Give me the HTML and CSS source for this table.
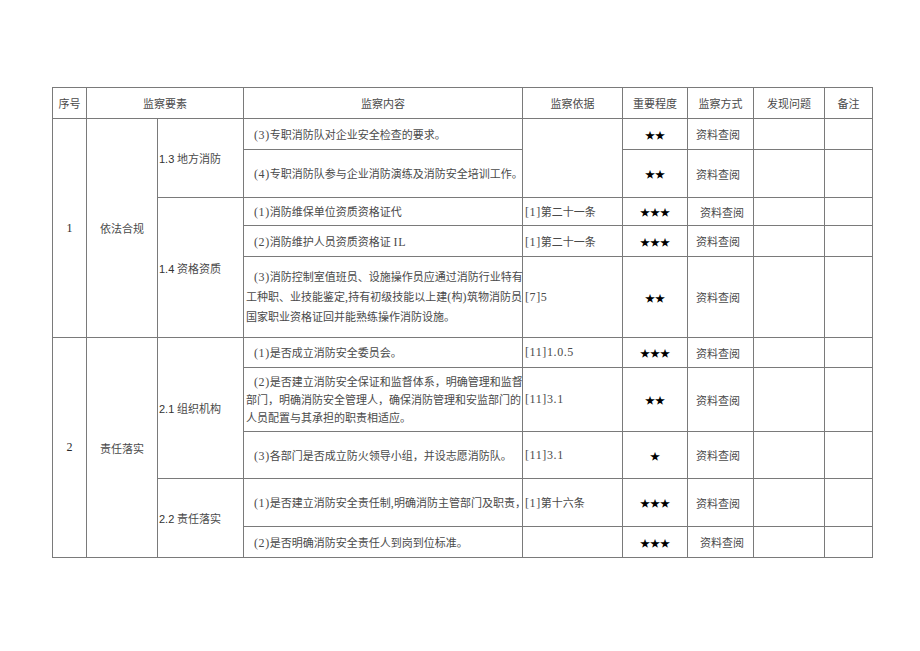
FILE: index.html
```html
<!DOCTYPE html>
<html lang="zh-CN">
<head>
<meta charset="utf-8">
<title>监察表</title>
<link rel="stylesheet" href="styles.css">
</head>
<body>
<div class="page">
<table class="grid">
  <colgroup>
    <col class="c-no">
    <col class="c-cat">
    <col class="c-sub">
    <col class="c-txt">
    <col class="c-ref">
    <col class="c-star">
    <col class="c-way">
    <col class="c-find">
    <col class="c-note">
  </colgroup>
  <tr class="h31">
    <th>序号</th>
    <th colspan="2">监察要素</th>
    <th>监察内容</th>
    <th>监察依据</th>
    <th>重要程度</th>
    <th>监察方式</th>
    <th>发现问题</th>
    <th>备注</th>
  </tr>
  <tr class="h31">
    <td rowspan="5" class="num">1</td>
    <td rowspan="5" class="cat">依法合规</td>
    <td rowspan="2" class="sub"><span class="sn">1.3</span> 地方消防</td>
    <td class="txt"><span class="n">(3)</span>专职消防队对企业安全检查的要求。</td>
    <td rowspan="2" class="ref"></td>
    <td class="star">★★</td>
    <td class="way">资料查阅</td>
    <td></td>
    <td></td>
  </tr>
  <tr class="h48">
    <td class="txt"><span class="n">(4)</span>专职消防队参与企业消防演练及消防安全培训工作。</td>
    <td class="star">★★</td>
    <td class="way">资料查阅</td>
    <td></td>
    <td></td>
  </tr>
  <tr class="h28">
    <td rowspan="3" class="sub"><span class="sn">1.4</span> 资格资质</td>
    <td class="txt"><span class="n">(1)</span>消防维保单位资质资格证代</td>
    <td class="ref"><span class="n">[1]</span>第二十一条</td>
    <td class="star">★★★</td>
    <td class="way way-r">资料查阅</td>
    <td></td>
    <td></td>
  </tr>
  <tr class="h31">
    <td class="txt"><span class="n">(2)</span>消防维护人员资质资格证 <span class="n">IL</span></td>
    <td class="ref"><span class="n">[1]</span>第二十一条</td>
    <td class="star">★★★</td>
    <td class="way">资料查阅</td>
    <td></td>
    <td></td>
  </tr>
  <tr class="h81">
    <td class="txt multi lh20"><span class="n">(3)</span>消防控制室值班员、设施操作员应通过消防行业特有<br>工种职、业技能鉴定<span class="p">,</span>持有初级技能以上建<span class="p">(</span>构<span class="p">)</span>筑物消防员<br>国家职业资格证回并能熟练操作消防设施。</td>
    <td class="ref"><span class="n">[7]5</span></td>
    <td class="star">★★</td>
    <td class="way">资料查阅</td>
    <td></td>
    <td></td>
  </tr>
  <tr class="h30">
    <td rowspan="5" class="num">2</td>
    <td rowspan="5" class="cat">责任落实</td>
    <td rowspan="3" class="sub"><span class="sn">2.1</span> 组织机构</td>
    <td class="txt"><span class="n">(1)</span>是否成立消防安全委员会。</td>
    <td class="ref"><span class="n">[11]1.0.5</span></td>
    <td class="star">★★★</td>
    <td class="way">资料查阅</td>
    <td></td>
    <td></td>
  </tr>
  <tr class="h64">
    <td class="txt multi lh18"><span class="n">(2)</span>是否建立消防安全保证和监督体系，明确管理和监督<br>部门，明确消防安全管理人，确保消防管理和安监部门的<br>人员配置与其承担的职责相适应。</td>
    <td class="ref"><span class="n">[11]3.1</span></td>
    <td class="star">★★</td>
    <td class="way">资料查阅</td>
    <td></td>
    <td></td>
  </tr>
  <tr class="h47">
    <td class="txt"><span class="n">(3)</span>各部门是否成立防火领导小组，并设志愿消防队。</td>
    <td class="ref"><span class="n">[11]3.1</span></td>
    <td class="star">★</td>
    <td class="way">资料查阅</td>
    <td></td>
    <td></td>
  </tr>
  <tr class="h48">
    <td rowspan="2" class="sub"><span class="sn">2.2</span> 责任落实</td>
    <td class="txt"><span class="n">(1)</span>是否建立消防安全责任制<span class="p">,</span>明确消防主管部门及职责，</td>
    <td class="ref"><span class="n">[1]</span>第十六条</td>
    <td class="star">★★★</td>
    <td class="way">资料查阅</td>
    <td></td>
    <td></td>
  </tr>
  <tr class="h31">
    <td class="txt"><span class="n">(2)</span>是否明确消防安全责任人到岗到位标准。</td>
    <td class="ref"></td>
    <td class="star">★★★</td>
    <td class="way way-r">资料查阅</td>
    <td></td>
    <td></td>
  </tr>
</table>
</div>
</body>
</html>
```

FILE: styles.css
```css
html, body {
  margin: 0;
  padding: 0;
  background: #ffffff;
}

body {
  font-family: "Liberation Serif", "Noto Sans CJK SC", serif;
  color: #4a4a4a;
}

.page {
  padding: 87px 0 0 52px;
}

.grid {
  border-collapse: collapse;
  table-layout: fixed;
  width: 821px;
  font-size: 11px;
}

.grid th,
.grid td {
  border: 1px solid #7a7a7a;
  padding: 0;
  vertical-align: middle;
  font-weight: normal;
  white-space: nowrap;
  overflow: visible;
}

.grid th {
  text-align: center;
  color: #4a4a4a;
}

.c-no { width: 34px; }
.c-cat { width: 71px; }
.c-sub { width: 86px; }
.c-txt { width: 279px; }
.c-ref { width: 100px; }
.c-star { width: 65px; }
.c-way { width: 66px; }
.c-find { width: 71px; }
.c-note { width: 48px; }

.h28 { height: 28px; }
.h30 { height: 30px; }
.h31 { height: 31px; }
.h47 { height: 47px; }
.h48 { height: 48px; }
.h64 { height: 64px; }
.h81 { height: 81px; }

.num {
  text-align: center;
  font-size: 12px;
  color: #2a2a2a;
}

.cat {
  text-align: center;
}

.sub {
  padding-left: 1px !important;
  text-align: left;
}

.sn {
  font-family: "Liberation Sans", sans-serif;
  color: #333;
}

.txt {
  padding-left: 2px !important;
  text-indent: 8px;
  text-align: left;
}

.lh20 { line-height: 20px; }
.lh18 { line-height: 18px; }

.n {
  font-size: 12px;
  letter-spacing: 0.6px;
}

.p {
  font-size: 12px;
  letter-spacing: 0.3px;
}

.ref {
  padding-left: 2px !important;
  text-align: left;
}

.star {
  text-align: center;
  font-family: "Noto Sans CJK SC", sans-serif;
  font-size: 10px;
  color: #000;
}

.way {
  padding-left: 8px !important;
  text-align: left;
}

.way-r {
  padding-left: 12px !important;
}
```
